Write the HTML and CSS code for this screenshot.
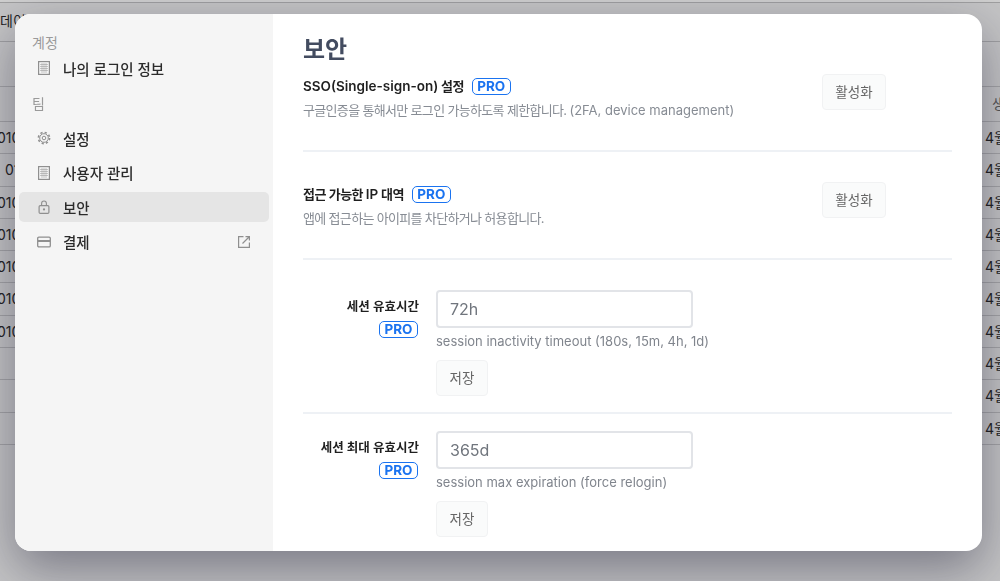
FILE: index.html
```html
<!DOCTYPE html>
<html lang="ko">
<head>
  <meta charset="UTF-8" />
  <meta name="viewport" content="width=device-width, initial-scale=1.0"/>
  <title>보안</title>
  <link rel="stylesheet" href="styles.css">
</head>
<body>

  <svg class="icon-defs" width="0" height="0">
    <symbol id="i-building" viewBox="0 0 14 14">
      <rect x="1.600" y="0.600" width="10.800" height="12.800" fill="none" stroke="currentColor" stroke-width="1.200"/>
      <path d="M5 2v10M7 2v10M9 2v10M3 3.500h8M3 5.500h8M3 7.500h8M3 9.500h8" stroke="currentColor" stroke-width="0.800" stroke-opacity="0.600"/>
    </symbol>
    <symbol id="i-gear" viewBox="0 0 14 14">
      <circle cx="7" cy="7" r="4.300" fill="none" stroke="currentColor" stroke-width="1"/>
      <circle cx="7" cy="7" r="5.600" fill="none" stroke="currentColor" stroke-width="1.600" stroke-dasharray="2.200 2.200"/>
      <circle cx="7" cy="7" r="1.800" fill="none" stroke="currentColor" stroke-width="1"/>
    </symbol>
    <symbol id="i-lock" viewBox="0 0 14 14">
      <rect x="2.100" y="5.600" width="9.800" height="7.800" rx="1.200" fill="none" stroke="currentColor" stroke-width="1.200"/>
      <path d="M4.600 5.600V3.400a2.400 2.400 0 0 1 4.800 0v2.200" fill="none" stroke="currentColor" stroke-width="1.100"/>
      <circle cx="7" cy="9.400" r="1.100" fill="currentColor"/>
    </symbol>
    <symbol id="i-card" viewBox="0 0 14 14">
      <rect x="0.700" y="2.100" width="12.600" height="9.800" rx="1.200" fill="none" stroke="currentColor" stroke-width="1.300"/>
      <path d="M1 6h12" stroke="currentColor" stroke-width="2"/>
    </symbol>
    <symbol id="i-external" viewBox="0 0 14 14">
      <path d="M6.500 1.600H1.600v10.800h10.800V7.500" fill="none" stroke="currentColor" stroke-width="1.200"/>
      <path d="M5.500 8.500L12 2M8.500 1.600h3.900v3.900" fill="none" stroke="currentColor" stroke-width="1.200"/>
    </symbol>
  </svg>

  <!-- tabela atras do modal -->
  <div class="backdrop">
    <div class="top-bar"></div>
    <div class="title-row">데이</div>
    <div class="filter-row"></div>
    <div class="row head-row"><span class="left"></span><span class="right head-cell">생</span></div>
    <div class="row"><span class="left">010</span><span class="right">4월</span></div>
    <div class="row"><span class="left short">01</span><span class="right">4월</span></div>
    <div class="row"><span class="left">010</span><span class="right">4월</span></div>
    <div class="row"><span class="left">010</span><span class="right">4월</span></div>
    <div class="row"><span class="left">010</span><span class="right">4월</span></div>
    <div class="row"><span class="left">010</span><span class="right">4월</span></div>
    <div class="row"><span class="left">010</span><span class="right">4월</span></div>
    <div class="row"><span class="left"></span><span class="right">4월</span></div>
    <div class="row"><span class="left"></span><span class="right">4월</span></div>
    <div class="row"><span class="left"></span><span class="right">4월</span></div>
  </div>

  <div class="modal">
    <aside class="sidebar">
      <div class="side-group">계정</div>
      <a class="side-item first">
        <svg class="side-icon"><use href="#i-building"/></svg>
        <span>나의 로그인 정보</span>
      </a>
      <div class="side-group team">팀</div>
      <a class="side-item">
        <svg class="side-icon"><use href="#i-gear"/></svg>
        <span>설정</span>
      </a>
      <a class="side-item">
        <svg class="side-icon"><use href="#i-building"/></svg>
        <span>사용자 관리</span>
      </a>
      <a class="side-item active">
        <svg class="side-icon"><use href="#i-lock"/></svg>
        <span>보안</span>
      </a>
      <a class="side-item">
        <svg class="side-icon"><use href="#i-card"/></svg>
        <span>결제</span>
        <svg class="side-icon external"><use href="#i-external"/></svg>
      </a>
    </aside>

    <main class="main">
      <h1>보안</h1>

      <section class="option">
        <div class="option-text">
          <h3><span class="latin">SSO(Single-sign-on)</span> 설정 <span class="pro">PRO</span></h3>
          <p>구글인증을 통해서만 로그인 가능하도록 제한합니다. <span class="latin">(2FA, device management)</span></p>
        </div>
        <button class="btn btn-wide">활성화</button>
      </section>

      <section class="option">
        <div class="option-text">
          <h3>접근 가능한 <span class="latin">IP</span> 대역 <span class="pro">PRO</span></h3>
          <p>앱에 접근하는 아이피를 차단하거나 허용합니다.</p>
        </div>
        <button class="btn btn-wide">활성화</button>
      </section>

      <section class="field">
        <div class="field-label">
          <label>세션 유효시간</label>
          <span class="pro">PRO</span>
        </div>
        <div class="field-body">
          <input type="text" placeholder="72h" />
          <p>session inactivity timeout (180s, 15m, 4h, 1d)</p>
          <button class="btn">저장</button>
        </div>
      </section>

      <section class="field">
        <div class="field-label">
          <label>세션 최대 유효시간</label>
          <span class="pro">PRO</span>
        </div>
        <div class="field-body">
          <input type="text" placeholder="365d" />
          <p>session max expiration (force relogin)</p>
          <button class="btn">저장</button>
        </div>
      </section>
    </main>
  </div>

</body>
</html>
```

FILE: styles.css
```css
html, body {
  margin: 0;
  height: 100%;
  overflow: hidden;
}
body {
  font-family: Inter, "Noto Sans CJK KR", sans-serif;
  background-color: #c4c4c5;
}
.icon-defs {
  display: block;
  height: 0;
}

/* fundo */
.backdrop {
  height: 581px;
  background-color: #c4c4c5;
  color: #222;
  font-size: 14px;
}
.top-bar {
  height: 2px;
  border-bottom: 1px solid #9f9fa0;
  background-color: #cfcfcf;
}
.title-row {
  height: 38px;
  line-height: 36px;
  border-bottom: 1px solid #a0a0a2;
}
.filter-row {
  height: 44px;
}
.row {
  display: flex;
  justify-content: space-between;
  height: 31.300px;
  line-height: 31px;
  border-bottom: 1px solid #a4a4a6;
}
.head-row {
  height: 34px;
  line-height: 34px;
  border-top: 1px solid #a4a4a6;
  color: #555;
}
.left {
  width: 30px;
  white-space: nowrap;
  margin-left: -3px;
}
.left.short {
  margin-left: 5px;
}
.right {
  width: 15px;
  white-space: nowrap;
}
.head-cell {
  width: 8px;
}

/* modal */
.modal {
  position: fixed;
  left: 15px;
  top: 14px;
  width: 967px;
  height: 537px;
  display: flex;
  overflow: hidden;
  background-color: white;
  border-radius: 16px;
  box-shadow: 0 18px 50px rgba(20, 20, 45, 0.42);
}
.sidebar {
  width: 258px;
  flex-shrink: 0;
  box-sizing: border-box;
  padding: 19px 4px 0;
  background-color: #f5f5f5;
}
.side-group {
  height: 19px;
  line-height: 19px;
  padding-left: 13px;
  font-size: 14px;
  color: #9a9a9a;
}
.side-group.team {
  margin-top: 11px;
  margin-bottom: 10px;
}
.side-item {
  display: flex;
  align-items: center;
  gap: 12px;
  height: 30px;
  margin-bottom: 4.500px;
  padding-left: 18px;
  padding-right: 18px;
  border-radius: 5px;
  font-size: 14.500px;
  font-weight: 500;
  color: #2b2b2b;
}
.side-item.first {
  margin-bottom: 0;
  margin-top: 1px;
}
.side-item.active {
  background-color: #e5e5e5;
}
.side-icon {
  width: 14px;
  height: 14px;
  color: #8f8f8f;
  flex-shrink: 0;
}
.side-icon.external {
  margin-left: auto;
}

.main {
  flex: 1;
  padding: 20px 30px 0;
  overflow: hidden;
}
h1 {
  margin: 0 0 11px;
  font-size: 24px;
  line-height: 32px;
  font-weight: 700;
  color: #434c60;
}
.option {
  display: flex;
  justify-content: space-between;
  align-items: flex-start;
  height: 73px;
  padding-right: 66px;
  margin-bottom: 33px;
  border-bottom: 2px solid #eef1f5;
}
.option h3 {
  margin: 0;
  font-size: 13px;
  line-height: 18px;
  font-weight: 600;
  letter-spacing: -0.500px;
  color: #1f1f1f;
}
.option h3 .latin {
  font-size: 13.500px;
  letter-spacing: 0;
}
.option p {
  margin: 6px 0 0;
  font-size: 13px;
  line-height: 18px;
  letter-spacing: -0.670px;
  color: #878c94;
}
.option p .latin {
  letter-spacing: 0;
}
.pro {
  display: inline-block;
  box-sizing: border-box;
  height: 17px;
  line-height: 14px;
  margin-left: 5px;
  padding: 0 4.500px;
  border: 1.500px solid #1a73f0;
  border-radius: 5px;
  font-size: 13.500px;
  font-weight: 700;
  letter-spacing: 0;
  color: #1a73f0;
  background-color: white;
}
.btn {
  box-sizing: border-box;
  width: 52px;
  height: 36px;
  padding: 0 0 2px;
  background-color: #fafbfb;
  border: 1.500px solid #f1f2f3;
  border-radius: 4px;
  font-family: inherit;
  font-size: 13.500px;
  color: #666;
}
.btn-wide {
  width: 64px;
  flex-shrink: 0;
  margin-top: -3px;
}
.field {
  display: flex;
  gap: 17px;
  padding-bottom: 16px;
  margin-top: -3px;
  border-bottom: 2px solid #eef1f5;
}
.field + .field {
  padding-top: 17px;
  margin-top: 0;
  border-bottom: none;
}
.field-label {
  width: 116px;
  flex-shrink: 0;
  text-align: right;
  padding-top: 8px;
}
.field-label label {
  display: block;
  font-size: 12.500px;
  line-height: 18px;
  font-weight: 600;
  color: #1f1f1f;
}
.field-label .pro {
  margin: 5px 1px 0 0;
}
.field-body input {
  display: block;
  box-sizing: border-box;
  width: 257px;
  height: 38px;
  padding: 0 12px;
  border: 2px solid #e2e4e8;
  border-radius: 4px;
  font-family: inherit;
  font-size: 16px;
  outline: none;
}
.field-body input::placeholder {
  color: #70757d;
}
.field-body p {
  margin: 4px 0 10px;
  font-size: 13px;
  line-height: 18px;
  color: #80858d;
}
```
